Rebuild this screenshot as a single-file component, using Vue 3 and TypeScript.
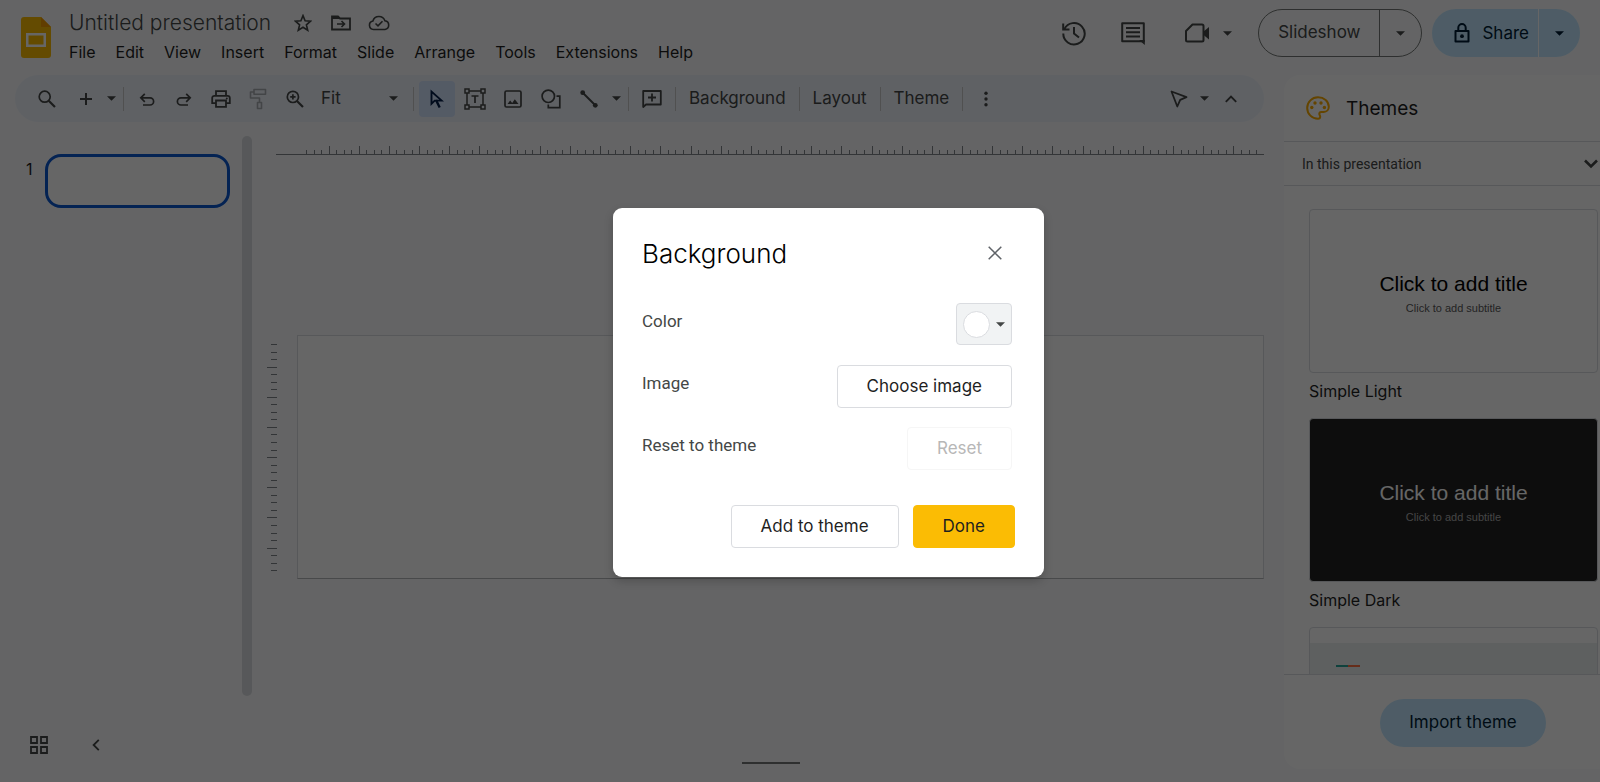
<script setup lang="ts">
import { ref } from 'vue'

interface Tick {
  at: number
  major: boolean
}

const menus: string[] = ['File', 'Edit', 'View', 'Insert', 'Format', 'Slide', 'Arrange', 'Tools', 'Extensions', 'Help']

function makeTicks(count: number): Tick[] {
  return Array.from({ length: count }, (_, i) => ({
    at: Math.round(i * 7.54),
    major: i % 4 === 3,
  }))
}

const columnTicks = makeTicks(127)
const rowTicks = makeTicks(31)

const zoom = ref('Fit')
const zoomLevels: string[] = ['Fit', '50%', '100%', '200%']
const open = ref(true)
</script>

<template>
  <div class="page">
    <header class="top">
      <svg class="logo" viewBox="0 0 30 41" aria-hidden="true">
        <path d="M3 0h17l10 10v28a3 3 0 0 1-3 3H3a3 3 0 0 1-3-3V3a3 3 0 0 1 3-3z" fill="#fbbc04" />
        <path d="M20 0l10 10H20z" fill="#f29900" />
        <path d="M5 16h20v14H5zM7.500 18.500v9h15v-9z" fill="#fff" fill-rule="evenodd" />
      </svg>
      <div class="heading">
        <div class="title-row">
          <h1>Untitled presentation</h1>
          <button class="mini" aria-label="Star">
            <svg width="18" height="18" viewBox="0 0 18 18"><path d="M9 1.600l2.100 5.200 5.500.4-4.200 3.600 1.300 5.400L9 13.300l-4.700 2.900 1.300-5.400L1.400 7.200l5.500-.4z" class="s" stroke-width="1.600" /></svg>
          </button>
          <button class="mini" aria-label="Move">
            <svg width="20" height="16" viewBox="0 0 20 16"><path d="M1 14.500V1.500h6l2 2h10v11z" class="s" stroke-width="1.800" /><path d="M1 1h6l2 3H1z" /><path d="M6 9h7M10.500 6l3 3-3 3" class="s" stroke-width="1.600" /></svg>
          </button>
          <button class="mini" aria-label="Document status">
            <svg width="22" height="16" viewBox="0 0 22 16"><path d="M5.500 14.500a4.300 4.300 0 0 1-.6-8.500 6.300 6.300 0 0 1 12-.2 4.400 4.400 0 0 1 .1 8.700z" class="s" stroke-width="1.600" /><path d="M7.500 8.500l2.500 2.400 4.500-4.600" class="s" stroke-width="1.600" /></svg>
          </button>
        </div>
        <nav class="menus">
          <button v-for="m in menus" :key="m">{{ m }}</button>
        </nav>
      </div>
      <div class="actions">
        <button class="act" aria-label="Version history">
          <svg width="26" height="26" viewBox="0 0 26 26"><path d="M3.400 9A10.700 10.700 0 1 1 2.300 13.500" class="s" stroke-width="2" /><path d="M2.200 3.500v6h6.300" class="s" stroke-width="2" /><path d="M13 7v6.500l5 4" class="s" stroke-width="2" /></svg>
        </button>
        <button class="act" aria-label="Comments">
          <svg width="26" height="26" viewBox="0 0 26 26"><path d="M2.200 3.200h21.600v18H2.200z" class="s" stroke-width="2" stroke-linejoin="round" /><path d="M19 20h5.800v5z" /><path d="M6 8h14M6 12.200h14M6 16.400h14" class="s" stroke-width="2" /></svg>
        </button>
        <button class="meet" aria-label="Join a call">
          <svg width="26" height="26" viewBox="0 0 26 26"><path d="M8.500 4.500H18a1.500 1.500 0 0 1 1.500 1.500v14a1.500 1.500 0 0 1-1.500 1.500H3.500A1.500 1.500 0 0 1 2 20v-9z" class="s" stroke-width="2" stroke-linejoin="round" /><path d="M19 12l6-5v12.500l-6-5z" /></svg>
          <svg class="caret" viewBox="0 0 10 5"><path d="M0 0h10L5 5z" /></svg>
        </button>
        <div class="split outline">
          <button class="main">Slideshow</button>
          <button class="drop" aria-label="Slideshow options"><svg class="caret" viewBox="0 0 10 5"><path d="M0 0h10L5 5z" /></svg></button>
        </div>
        <div class="split filled">
          <button class="main">
            <svg width="16" height="20" viewBox="0 0 16 20"><path d="M1.500 8h13v10.500h-13z" class="s" stroke-width="2" stroke-linejoin="round" /><path d="M4.300 8V4.800a3.700 3.700 0 0 1 7.400 0V8" class="s" stroke-width="2" /><circle cx="8" cy="13.200" r="1.900" /></svg>
            Share
          </button>
          <button class="drop" aria-label="Share options"><svg class="caret" viewBox="0 0 10 5"><path d="M0 0h10L5 5z" /></svg></button>
        </div>
      </div>
    </header>

    <div class="body">
      <div class="work">
        <div class="toolbar" role="toolbar">
          <div class="group first">
            <button class="tool" aria-label="Search"><svg width="18" height="18" viewBox="0 0 18 18"><circle cx="6.700" cy="6.700" r="5.500" class="s" stroke-width="1.700" /><path d="M10.700 10.700l6.300 6.300" class="s" stroke-width="2.200" /></svg></button>
            <div class="pair">
              <button class="tool" aria-label="New slide"><svg width="14" height="14" viewBox="0 0 14 14"><path d="M7 1v12M1 7h12" class="s" stroke-width="2" /></svg></button>
              <button class="drop-tool" aria-label="New slide with layout"><svg class="caret" viewBox="0 0 10 5"><path d="M0 0h10L5 5z" /></svg></button>
            </div>
          </div>
          <i class="sep"></i>
          <div class="group tight">
            <button class="tool" aria-label="Undo"><svg width="16" height="16" viewBox="0 0 16 16"><path d="M1.800 6.800H11a3.600 3.600 0 0 1 0 7.200H4M5.800 2.800l-4 4 4 4" class="s" stroke-width="1.700" /></svg></button>
            <button class="tool" aria-label="Redo"><svg width="16" height="16" viewBox="0 0 16 16"><path d="M14.200 6.800H5a3.600 3.600 0 0 0 0 7.200h7M10.200 2.800l4 4-4 4" class="s" stroke-width="1.700" /></svg></button>
            <button class="tool" aria-label="Print"><svg width="20" height="18" viewBox="0 0 20 18"><path d="M5 5.500V1.200h10v4.300M4.500 13.200H1.200V8a2.200 2.200 0 0 1 2.200-2.200h13.200A2.200 2.200 0 0 1 18.800 8v5.200h-3.300M5 10.500h10v6.300H5z" class="s" stroke-width="1.800" /><circle cx="15.800" cy="8.500" r="1" /></svg></button>
            <button class="tool faded" aria-label="Paint format"><svg width="18" height="22" viewBox="0 0 18 22"><path d="M5 1.500h11.500v4.800H5zM5 4H1.500v6h9v4.500M8.500 14.500h4v6h-4z" class="s" stroke-width="1.600" stroke-linejoin="round" /></svg></button>
            <button class="tool" aria-label="Zoom in"><svg width="18" height="18" viewBox="0 0 18 18"><circle cx="6.900" cy="6.900" r="5.600" class="s" stroke-width="1.700" /><path d="M11 11l6 6" class="s" stroke-width="2.200" /><path d="M6.900 4.200v5.400M4.200 6.900h5.400" class="s" stroke-width="1.700" /></svg></button>
          </div>
          <div class="zoom">
            <select v-model="zoom" aria-label="Zoom">
              <option v-for="z in zoomLevels" :key="z">{{ z }}</option>
            </select>
            <svg class="caret" viewBox="0 0 10 5"><path d="M0 0h10L5 5z" /></svg>
          </div>
          <i class="sep"></i>
          <div class="group">
            <button class="tool on" aria-label="Select"><svg width="14" height="20" viewBox="0 0 14 20"><path d="M1.500 2.500v12.300l3.200-3.200h7z" class="s" stroke-width="1.900" /><path d="M6 11l3.700 7.500" class="s" stroke-width="2.400" /></svg></button>
            <button class="tool" aria-label="Text box"><svg width="22" height="22" viewBox="0 0 22 22"><path d="M1 1h4v4H1zM17 1h4v4h-4zM1 17h4v4H1zM17 17h4v4h-4zM5 3h12M5 19h12M3 5v12M19 5v12" class="s" stroke-width="1.500" /><path d="M7.500 8h7M11 8v7" class="s" stroke-width="1.700" /></svg></button>
            <button class="tool" aria-label="Insert image"><svg width="18" height="18" viewBox="0 0 18 18"><rect x="1" y="1" width="16" height="16" rx="1.500" class="s" stroke-width="1.700" /><path d="M3.500 14l2.700-3.400 2 2.400 2.600-3.800L14.500 14z" /></svg></button>
            <button class="tool" aria-label="Shape"><svg width="20" height="20" viewBox="0 0 20 20"><circle cx="7.300" cy="7.300" r="6.200" class="s" stroke-width="1.700" /><path d="M15.500 7.200h3.300v11.500H7.300v-3.200" class="s" stroke-width="1.700" /></svg></button>
            <button class="tool" aria-label="Line"><svg width="18" height="18" viewBox="0 0 18 18"><path d="M2.500 2.500l13 13" class="s" stroke-width="2" /><circle cx="2.700" cy="2.700" r="2.400" /><circle cx="15.300" cy="15.300" r="2.400" /></svg></button>
            <button class="drop-tool" aria-label="Line options"><svg class="caret" viewBox="0 0 10 5"><path d="M0 0h10L5 5z" /></svg></button>
          </div>
          <i class="sep"></i>
          <button class="tool" aria-label="Add comment"><svg width="20" height="20" viewBox="0 0 20 20"><path d="M1.200 18V2h17.600v13.500H4z" class="s" stroke-width="1.800" stroke-linejoin="round" /><path d="M10 4.500v8M6 8.500h8" class="s" stroke-width="1.800" /></svg></button>
          <i class="sep"></i>
          <button class="word">Background</button>
          <i class="sep"></i>
          <button class="word">Layout</button>
          <i class="sep"></i>
          <button class="word">Theme</button>
          <i class="sep"></i>
          <button class="tool" aria-label="More"><svg width="6" height="16" viewBox="0 0 6 16"><circle cx="3" cy="2.200" r="1.700" /><circle cx="3" cy="8" r="1.700" /><circle cx="3" cy="13.800" r="1.700" /></svg></button>
          <div class="group end">
            <div class="pair">
              <button class="tool" aria-label="Pointer"><svg width="18" height="18" viewBox="0 0 18 18"><path d="M1.500 1.500l15 5.700-6.300 2.700-2.900 6.600z" class="s" stroke-width="1.800" stroke-linejoin="round" /></svg></button>
              <button class="drop-tool" aria-label="Pointer mode"><svg class="caret" viewBox="0 0 10 5"><path d="M0 0h10L5 5z" /></svg></button>
            </div>
            <button class="tool" aria-label="Hide the menus"><svg width="12" height="8" viewBox="0 0 12 8"><path d="M.8 6.800L6 1.600l5.200 5.200" class="s" stroke-width="1.900" /></svg></button>
          </div>
        </div>

        <div class="stage">
          <aside class="film">
            <span class="num">1</span>
            <button class="thumb" aria-label="Slide 1"></button>
            <i class="bar"></i>
          </aside>
          <main class="canvas">
            <svg class="ruler-x" aria-hidden="true">
              <rect v-for="t in columnTicks" :key="t.at" :x="t.at + 30" :y="t.major ? 0 : 4" width="1" :height="t.major ? 9 : 5" />
              <rect x="0" y="8" width="100%" height="1" />
            </svg>
            <div class="paper-row">
              <svg class="ruler-y" aria-hidden="true">
                <rect v-for="t in rowTicks" :key="t.at" :x="t.major ? 0 : 4" :y="t.at + 9" :width="t.major ? 10 : 6" height="1" />
              </svg>
              <div class="paper"></div>
            </div>
          </main>
        </div>
      </div>

      <aside class="themes">
        <div class="themes-head">
          <svg width="24" height="24" viewBox="0 0 24 24"><path d="M12 1.200a10.800 10.800 0 0 0 0 21.600c1.400 0 2.200-1 2.200-2.200 0-1.300-.9-1.600-.9-2.800 0-1.100.9-1.900 2-1.900h2.500c3 0 5-2.300 5-5.200C22.800 5.300 18 1.200 12 1.200z" fill="none" stroke="#f9ab00" stroke-width="2" /><g fill="#f9ab00"><circle cx="5.800" cy="11.500" r="1.700" /><circle cx="9" cy="7" r="1.700" /><circle cx="15" cy="7" r="1.700" /><circle cx="18.400" cy="11.500" r="1.700" /></g></svg>
          <h2>Themes</h2>
        </div>
        <button class="in-this">
          <span>In this presentation</span>
          <svg width="14" height="10" viewBox="0 0 14 10"><path d="M1 1.500l6 6 6-6" class="s" stroke-width="2.600" /></svg>
        </button>
        <div class="list">
          <figure>
            <div class="card"><b>Click to add title</b><small>Click to add subtitle</small></div>
            <figcaption>Simple Light</figcaption>
          </figure>
          <figure>
            <div class="card dark"><b>Click to add title</b><small>Click to add subtitle</small></div>
            <figcaption>Simple Dark</figcaption>
          </figure>
          <figure>
            <div class="card stream"><div class="field"><i class="teal"></i><i class="orange"></i></div></div>
          </figure>
        </div>
        <div class="import-row"><button class="import">Import theme</button></div>
      </aside>
    </div>

    <footer class="bottom">
      <button aria-label="Grid view"><svg width="18" height="18" viewBox="0 0 18 18"><path d="M1 1h6v6H1zM11 1h6v6h-6zM1 11h6v6H1zM11 11h6v6h-6z" class="s" stroke-width="1.800" /></svg></button>
      <button aria-label="Hide filmstrip"><svg width="8" height="12" viewBox="0 0 8 12"><path d="M6.800.8L1.600 6l5.200 5.200" class="s" stroke-width="1.800" /></svg></button>
      <i class="handle"></i>
    </footer>

    <div v-if="open" class="scrim">
      <section class="dialog" role="dialog" aria-labelledby="dialog-title">
        <div class="dialog-head">
          <h2 id="dialog-title">Background</h2>
          <button class="close" aria-label="Close" @click="open = false"><svg width="14" height="14" viewBox="0 0 14 14"><path d="M.7.7l12.600 12.600M13.300.7L.7 13.300" class="s" stroke-width="1.500" /></svg></button>
        </div>
        <div class="row">
          <label for="bg-color">Color</label>
          <button id="bg-color" class="swatch"><i></i><svg class="caret" viewBox="0 0 10 5"><path d="M0 0h10L5 5z" /></svg></button>
        </div>
        <div class="row">
          <label for="bg-image">Image</label>
          <button id="bg-image" class="btn">Choose image</button>
        </div>
        <div class="row">
          <label for="bg-reset">Reset to theme</label>
          <button id="bg-reset" class="btn" disabled>Reset</button>
        </div>
        <div class="dialog-foot">
          <button class="btn">Add to theme</button>
          <button class="btn primary" @click="open = false">Done</button>
        </div>
      </section>
    </div>
  </div>
</template>

<style>
body {
  margin: 0;
}
</style>

<style scoped>
* {
  box-sizing: border-box;
}
.page {
  position: relative;
  display: flex;
  flex-direction: column;
  height: 100vh;
  overflow: hidden;
  background: #f9fbfd;
  color: #1f1f1f;
  font-family: Inter, 'Liberation Sans', sans-serif;
  font-size: 16px;
}
button,
select {
  margin: 0;
  padding: 0;
  border: 0;
  background: none;
  color: inherit;
  font: inherit;
  cursor: pointer;
}
svg {
  display: block;
  flex: none;
  fill: #444746;
}
.s {
  fill: none;
  stroke: #444746;
}
.caret {
  width: 9px;
  height: 5px;
}
h1,
h2,
figure {
  margin: 0;
  font-weight: 400;
}

.top {
  display: flex;
  flex: none;
  height: 75px;
}
.logo {
  width: 30px;
  height: 41px;
  margin: 17px 18px 0 21px;
}
.heading {
  padding-top: 9px;
}
.title-row {
  display: flex;
  align-items: center;
  height: 28px;
}
h1 {
  margin-right: 13px;
  color: #444746;
  font-size: 21px;
  font-weight: 300;
  line-height: 28px;
}
.mini {
  display: grid;
  place-items: center;
  width: 38px;
  height: 28px;
}
.menus {
  display: flex;
  gap: 20px;
  line-height: 30px;
}
.actions {
  display: flex;
  align-items: center;
  height: 48px;
  margin: 9px 20px 0 auto;
}
.act {
  display: grid;
  place-items: center;
  width: 59px;
  height: 48px;
}
.meet {
  display: flex;
  align-items: center;
  gap: 13px;
  padding: 0 26px 0 22px;
}
.split {
  display: flex;
  height: 48px;
  border-radius: 24px;
  overflow: hidden;
  font-size: 17px;
}
.split .main {
  display: flex;
  align-items: center;
  gap: 12px;
}
.split .drop {
  display: grid;
  place-items: center;
  width: 41px;
}
.outline {
  margin-right: 10px;
  border: 1px solid #747775;
  color: #444746;
}
.outline .main {
  padding: 0 19px 2px;
  border-right: 1px solid #747775;
}
.filled {
  background: #c2e7ff;
  color: #001d35;
}
.filled .main {
  padding: 0 9px 0 22px;
  border-right: 1px solid #fff;
}
.filled svg {
  fill: #001d35;
}
.filled .s {
  fill: none;
  stroke: #001d35;
}

.body {
  display: flex;
  flex: 1;
  min-height: 0;
}
.work {
  display: flex;
  flex: 1;
  flex-direction: column;
  min-width: 0;
}
.toolbar {
  display: flex;
  align-items: center;
  flex: none;
  height: 47px;
  margin-left: 15px;
  padding: 0 15px 0 14px;
  border-radius: 24px;
  background: #eef2fb;
  color: #444746;
}
.group {
  display: flex;
  align-items: center;
  gap: 2px;
}
.group.first {
  gap: 3px;
}
.group.tight {
  gap: 1px;
}
.group.end {
  margin-left: auto;
}
.pair {
  display: flex;
}
.tool {
  display: grid;
  flex: none;
  place-items: center;
  width: 36px;
  height: 36px;
  border-radius: 4px;
}
.drop-tool {
  display: grid;
  place-items: center;
  width: 14px;
  height: 36px;
}
.tool.on {
  background: #d3e3fd;
}
.tool.on .s {
  stroke: #041e49;
}
.faded {
  opacity: 0.4;
}
.sep {
  flex: none;
  width: 1px;
  height: 24px;
  margin: 0 5px;
  background: #c7c7c7;
}
.zoom {
  display: grid;
  align-items: center;
  width: 95px;
}
.zoom > * {
  grid-area: 1 / 1;
}
.zoom select {
  appearance: none;
  width: 95px;
  height: 36px;
  padding: 0 0 2px 8px;
  font-size: 17px;
}
.zoom .caret {
  justify-self: end;
  margin-right: 10px;
  pointer-events: none;
}
.word {
  height: 36px;
  padding: 0 8px 2px;
  font-size: 17px;
}

.stage {
  display: flex;
  flex: 1;
  min-height: 0;
}
.film {
  display: flex;
  align-items: flex-start;
  flex: none;
  width: 276px;
  padding: 14px 24px 0 26px;
}
.num {
  width: 19px;
  margin-top: 23px;
  line-height: 20px;
}
.thumb {
  width: 185px;
  height: 54px;
  margin-top: 18px;
  border: 3px solid #0b57d0;
  border-radius: 16px;
  background: #fff;
}
.bar {
  width: 10px;
  height: 560px;
  margin-left: auto;
  border-radius: 5px;
  background: #dadce0;
}
.canvas {
  display: flex;
  flex: 1;
  flex-direction: column;
  min-width: 0;
  padding-top: 24px;
}
.ruler-x {
  width: 100%;
  height: 9px;
  fill: #80868b;
}
.paper-row {
  display: flex;
  margin-top: 180px;
}
.ruler-y {
  width: 10px;
  height: 244px;
  margin: 0 20px 0 -9px;
  fill: #80868b;
}
.paper {
  flex: 1;
  height: 244px;
  border: 1px solid #dadce0;
  border-bottom-color: #b4b6b8;
  background: #fff;
}

.themes {
  display: flex;
  flex: none;
  flex-direction: column;
  width: 316px;
  height: 694px;
  margin-left: 20px;
  border-radius: 16px 0 0 16px;
  background: #fff;
}
.themes-head {
  display: flex;
  align-items: center;
  flex: none;
  gap: 16px;
  height: 67px;
  padding-left: 22px;
  border-bottom: 1px solid #dadce0;
}
.themes-head h2 {
  font-size: 19px;
}
.in-this {
  display: flex;
  align-items: center;
  justify-content: space-between;
  flex: none;
  height: 44px;
  padding: 0 2px 0 18px;
  border-bottom: 1px solid #dadce0;
  color: #444746;
  font-family: Roboto, sans-serif;
  font-size: 14px;
}
.list {
  flex: 1;
  min-height: 0;
  padding: 23px 2px 0 25px;
  overflow: hidden;
}
.card {
  display: flex;
  flex-direction: column;
  align-items: center;
  height: 164px;
  padding-top: 60px;
  border: 1px solid #dadce0;
  border-radius: 4px;
  background: #fff;
  font-family: 'Liberation Sans', sans-serif;
}
.card b {
  color: #000;
  font-size: 21px;
  font-weight: 400;
  line-height: 28px;
}
.card small {
  color: #595959;
  font-size: 11px;
  line-height: 20px;
}
.dark {
  background: #212121;
}
.dark b {
  color: #fff;
}
.dark small {
  color: #adadad;
}
figcaption {
  height: 45px;
  line-height: 36px;
}
.stream {
  display: block;
  padding-top: 15px;
}
.field {
  display: flex;
  height: 148px;
  padding: 22px 26px;
  background: #eceff1;
}
.field i {
  width: 12px;
  height: 2px;
}
.teal {
  background: #26a69a;
}
.orange {
  background: #ff7043;
}
.import-row {
  display: flex;
  justify-content: center;
  flex: none;
  height: 95px;
  padding: 24px 0 0 42px;
  border-top: 1px solid #dadce0;
}
.import {
  height: 48px;
  padding: 0 29px 2px;
  border-radius: 24px;
  background: #c2e7ff;
  color: #001d35;
  font-size: 17px;
}

.bottom {
  position: absolute;
  bottom: 18px;
  left: 20px;
  display: flex;
  align-items: center;
  width: 1225px;
  height: 38px;
}
.bottom button {
  display: grid;
  place-items: center;
  width: 38px;
  height: 38px;
  margin-right: 19px;
}
.handle {
  align-self: flex-end;
  width: 58px;
  height: 2px;
  margin-left: 608px;
  background: #747775;
}

.scrim {
  position: absolute;
  inset: 0;
  display: grid;
  place-items: center;
  padding: 3px 0 0 57px;
  background: rgba(0, 0, 0, 0.6);
}
.dialog {
  width: 431px;
  padding: 22px 29px 29px 29px;
  border-radius: 9px;
  background: #fff;
  box-shadow: 0 4px 10px rgba(0, 0, 0, 0.2);
}
.dialog-head {
  display: flex;
  align-items: center;
  justify-content: space-between;
  height: 46px;
  margin-bottom: 27px;
}
.dialog-head h2 {
  color: #000;
  font-size: 26px;
  font-weight: 300;
}
.close {
  display: grid;
  place-items: center;
  width: 40px;
  height: 40px;
}
.close .s {
  stroke: #5f6368;
}
.row {
  display: flex;
  align-items: flex-start;
  justify-content: space-between;
  height: 43px;
  margin: 0 3px 19px 0;
}
.row label {
  color: #444746;
  font-family: Roboto, sans-serif;
  font-size: 17px;
  line-height: 36px;
}
.swatch {
  display: flex;
  align-items: center;
  gap: 6px;
  height: 42px;
  padding: 0 6px;
  border: 1px solid #dadce0;
  border-radius: 4px;
  background: #f1f3f4;
}
.swatch i {
  width: 27px;
  height: 27px;
  border: 1px solid #dadce0;
  border-radius: 50%;
  background: #fff;
}
.btn {
  height: 43px;
  padding: 0 29px 2px;
  border: 1px solid #dadce0;
  border-radius: 4px;
  background: #fff;
  color: #1f1f1f;
  font-size: 17px;
}
.btn:disabled {
  border-color: #f6f6f6;
  color: #b7b7b7;
  cursor: default;
}
.btn.primary {
  border-color: #fbbc04;
  background: #fbbc04;
}
.dialog-foot {
  display: flex;
  justify-content: flex-end;
  gap: 14px;
  margin-top: 35px;
}
</style>
